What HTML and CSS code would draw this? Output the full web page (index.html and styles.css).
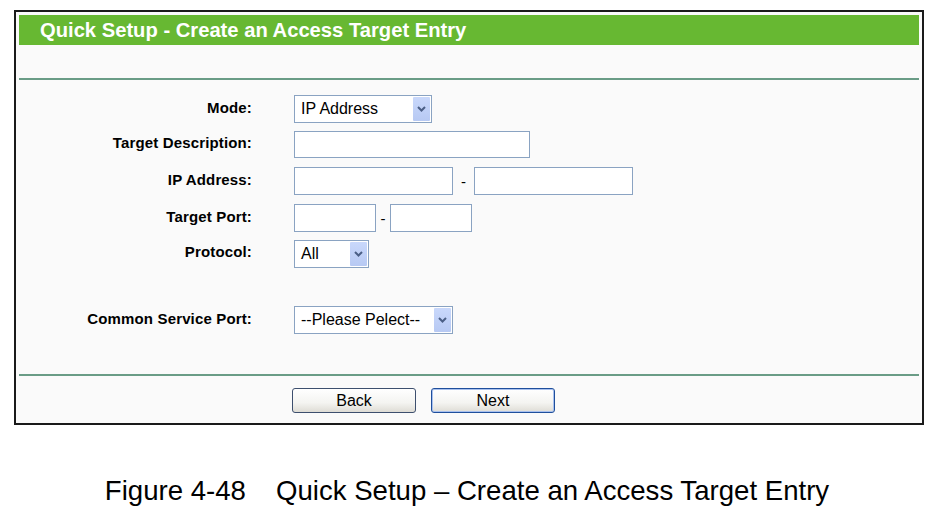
FILE: index.html
```html
<!DOCTYPE html>
<html lang="en">
<head>
<meta charset="utf-8">
<title>Quick Setup - Create an Access Target Entry</title>
<link rel="stylesheet" href="styles.css">
</head>
<body>
<div class="panel">
  <div class="title">Quick Setup - Create an Access Target Entry</div>
  <div class="spacer"></div>
  <div class="form">
    <div class="label">Mode:</div>
    <div class="field">
      <div class="select select-mode"><span class="select-text">IP Address</span><span class="select-btn"><svg width="9" height="6" viewBox="0 0 9 6"><path d="M1 1 L4.5 4.5 L8 1" fill="none" stroke="#4b5f86" stroke-width="2"/></svg></span></div>
    </div>

    <div class="label">Target Description:</div>
    <div class="field"><div class="input input-desc"></div></div>

    <div class="label">IP Address:</div>
    <div class="field">
      <div class="input input-ip"></div><span class="dash dash-ip">-</span><div class="input input-ip"></div>
    </div>

    <div class="label">Target Port:</div>
    <div class="field">
      <div class="input input-port"></div><span class="dash dash-port">-</span><div class="input input-port"></div>
    </div>

    <div class="label">Protocol:</div>
    <div class="field">
      <div class="select select-proto"><span class="select-text">All</span><span class="select-btn"><svg width="9" height="6" viewBox="0 0 9 6"><path d="M1 1 L4.5 4.5 L8 1" fill="none" stroke="#4b5f86" stroke-width="2"/></svg></span></div>
    </div>

    <div class="gap-row"></div>

    <div class="label">Common Service Port:</div>
    <div class="field">
      <div class="select select-csp"><span class="select-text">--Please Pelect--</span><span class="select-btn"><svg width="9" height="6" viewBox="0 0 9 6"><path d="M1 1 L4.5 4.5 L8 1" fill="none" stroke="#4b5f86" stroke-width="2"/></svg></span></div>
    </div>
  </div>
  <div class="buttons">
    <div class="btn">Back</div>
    <div class="btn btn-default">Next</div>
  </div>
</div>
<p class="caption"><span>Figure 4-48</span><span class="caption-title">Quick Setup – Create an Access Target Entry</span></p>
</body>
</html>
```

FILE: styles.css
```css
html, body {
  margin: 0;
  padding: 0;
  background: #ffffff;
}

body {
  font-family: "Liberation Sans", Arial, sans-serif;
  color: #000;
}

.panel {
  box-sizing: border-box;
  width: 910px;
  margin: 10px 0 0 14px;
  border: 2px solid #1a1a1a;
  padding: 3px;
  background: #fafafa;
}

.title {
  height: 30px;
  line-height: 30px;
  background: #67b832;
  color: #ffffff;
  font-size: 20.2px;
  font-weight: bold;
  padding-left: 21px;
}

.spacer {
  height: 33px;
  border-bottom: 2px solid #6a9c86;
}

.form {
  display: grid;
  grid-template-columns: 233px 1fr;
  grid-template-rows: 36px 35px 38px 36px 35px 31px 36px;
  column-gap: 42px;
  padding: 11px 0 36px;
  border-bottom: 2px solid #6a9c86;
}

.label {
  display: flex;
  align-items: center;
  justify-content: flex-end;
  font-size: 15px;
  font-weight: bold;
  letter-spacing: 0.15px;
  padding-bottom: 4px;
  box-sizing: border-box;
}

.field {
  display: flex;
  align-items: center;
}

.gap-row {
  grid-column: 1 / span 2;
}

.input {
  box-sizing: border-box;
  height: 28px;
  border: 1px solid #8aa3c2;
  background: #ffffff;
}

.input-desc {
  width: 236px;
  height: 27px;
}

.input-ip {
  width: 159px;
}

.input-port {
  width: 82px;
}

.dash {
  font-size: 15px;
  text-align: center;
}

.dash-ip {
  width: 21px;
}

.dash-port {
  width: 14px;
}

.select {
  box-sizing: border-box;
  height: 28px;
  display: flex;
  align-items: center;
  border: 1px solid #8aa3c2;
  background: #ffffff;
  padding: 1px;
}

.select-mode {
  width: 138px;
}

.select-proto {
  width: 75px;
}

.select-csp {
  width: 159px;
}

.select-text {
  flex: 1;
  font-size: 16px;
  padding-left: 5px;
  white-space: nowrap;
}

.select-btn {
  width: 17px;
  align-self: stretch;
  display: flex;
  align-items: center;
  justify-content: center;
  background: linear-gradient(#c9d8fb, #b7c9f3);
  border-radius: 1px;
}

.buttons {
  display: flex;
  gap: 15px;
  padding: 12px 0 7px 273px;
}

.btn {
  box-sizing: border-box;
  width: 124px;
  height: 25px;
  line-height: 23px;
  text-align: center;
  font-size: 16px;
  border: 1px solid #3d4f6e;
  border-radius: 3px;
  background: linear-gradient(#ffffff 0%, #f4f4f1 60%, #dedcd5 100%);
}

.btn-default {
  border-color: #1f4f9c;
  box-shadow: inset 0 0 0 1px #a9c1ee;
}

.caption {
  margin: 50px 0 0;
  font-size: 27.6px;
  line-height: 32px;
  text-align: center;
}

.caption-title {
  margin-left: 30px;
}
```
